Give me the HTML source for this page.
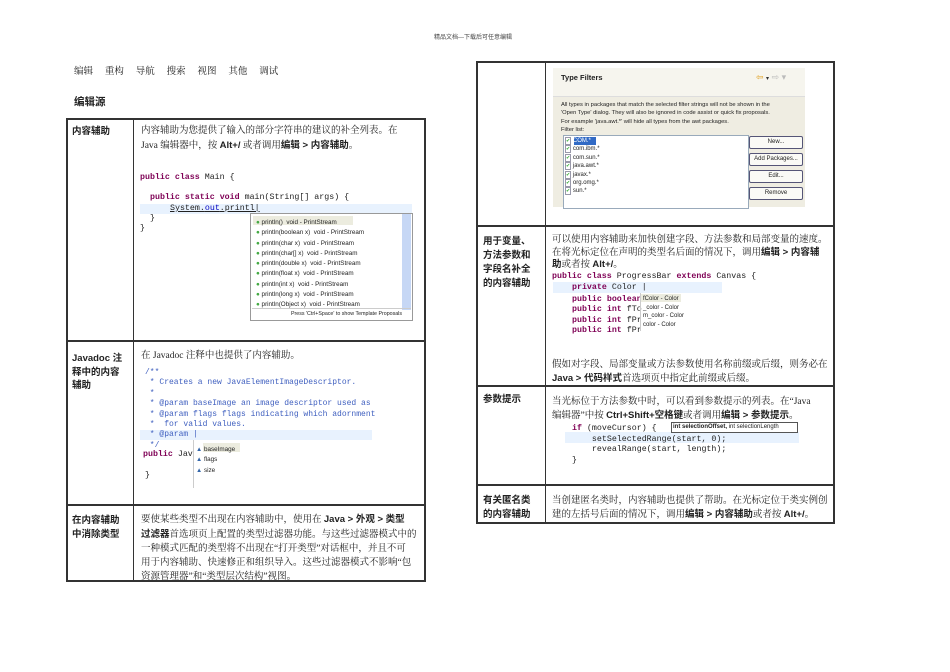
<!DOCTYPE html>
<html><head><meta charset="utf-8"><style>
body{margin:0;width:950px;height:672px;background:#fff;position:relative;overflow:hidden;font-family:"Liberation Serif","Noto Serif CJK SC",serif;color:#222}
.a{position:absolute;white-space:nowrap;line-height:1}
.t{font-size:9.5px}
.b{font-weight:bold;font-family:"Liberation Sans","Noto Sans CJK SC",sans-serif}
.l{font-size:9.5px;font-weight:bold;font-family:"Liberation Sans","Noto Sans CJK SC",sans-serif}
.c{font-family:"Liberation Mono",monospace;font-size:8.3px;color:#222}
.k{color:#7f0055;font-weight:bold}
.cm{color:#3f5fbf}
.s{font-family:"Liberation Sans",sans-serif;font-size:6.3px;color:#222}
.line{position:absolute;background:#333}
</style></head><body>
<div class="a" style="left:434px;top:35px;font-size:6px;color:#444;font-family:'Liberation Sans','Noto Sans CJK SC',sans-serif">精品文档---下载后可任意编辑</div>
<div class="a t" style="left:74px;top:68px;word-spacing:0">编辑&nbsp;&nbsp;&nbsp;&nbsp;&nbsp;重构&nbsp;&nbsp;&nbsp;&nbsp;&nbsp;导航&nbsp;&nbsp;&nbsp;&nbsp;&nbsp;搜索&nbsp;&nbsp;&nbsp;&nbsp;&nbsp;视图&nbsp;&nbsp;&nbsp;&nbsp;&nbsp;其他&nbsp;&nbsp;&nbsp;&nbsp;&nbsp;调试</div>
<div class="a l" style="left:74px;top:97px;font-size:10.5px">编辑源</div>

<!-- left table -->
<div class="line" style="left:66px;top:118px;width:360px;height:2px"></div>
<div class="line" style="left:66px;top:118px;width:2px;height:464px"></div>
<div class="line" style="left:424px;top:118px;width:2px;height:464px"></div>
<div class="line" style="left:133px;top:118px;width:1px;height:464px"></div>
<div class="line" style="left:66px;top:340px;width:360px;height:2px"></div>
<div class="line" style="left:66px;top:504px;width:360px;height:2px"></div>
<div class="line" style="left:66px;top:580px;width:360px;height:2px"></div>

<div class="a l" style="left:72px;top:127px">内容辅助</div>
<div class="a t" style="left:141px;top:127px">内容辅助为您提供了输入的部分字符串的建议的补全列表。在</div>
<div class="a t" style="left:141px;top:141px">Java 编辑器中，按 <span class="b">Alt+/</span> 或者调用<span class="b">编辑 &gt; 内容辅助</span>。</div>
<div class="a c" style="left:140px;top:174px"><span class="k">public class</span> Main {</div>
<div class="a c" style="left:150px;top:194px"><span class="k">public static void</span> main(String[] args) {</div>
<div style="position:absolute;left:140px;top:204px;width:272px;height:10px;background:#e8f2fe"></div>
<div class="a c" style="left:170px;top:205px;text-decoration:underline">System.<span style="color:#0000c0">out</span>.printl|</div>
<div class="a c" style="left:150px;top:215px">}</div>
<div class="a c" style="left:140px;top:225px">}</div>
<div style="position:absolute;left:250px;top:213px;width:161px;height:106px;border:1px solid #999;background:#fff"></div>
<div style="position:absolute;left:402px;top:214px;width:9px;height:96px;background:#c6d7f5"></div>
<div style="position:absolute;left:252px;top:308px;width:159px;height:1px;background:#ccc"></div>
<div class="a s" style="left:291px;top:312px;font-size:5.3px">Press 'Ctrl+Space' to show Template Proposals</div>
<div style="position:absolute;left:253px;top:216px;width:100px;height:9px;background:#ececdf"></div>
<div class="a s" style="left:256px;top:218px;line-height:10.3px"><span style="color:#4a4">●</span> println()&nbsp; void - PrintStream<br><span style="color:#4a4">●</span> println(boolean x)&nbsp; void - PrintStream<br><span style="color:#4a4">●</span> println(char x)&nbsp; void - PrintStream<br><span style="color:#4a4">●</span> println(char[] x)&nbsp; void - PrintStream<br><span style="color:#4a4">●</span> println(double x)&nbsp; void - PrintStream<br><span style="color:#4a4">●</span> println(float x)&nbsp; void - PrintStream<br><span style="color:#4a4">●</span> println(int x)&nbsp; void - PrintStream<br><span style="color:#4a4">●</span> println(long x)&nbsp; void - PrintStream<br><span style="color:#4a4">●</span> println(Object x)&nbsp; void - PrintStream</div>

<div class="a l" style="left:72px;top:352px;line-height:13.5px">Javadoc 注<br>释中的内容<br>辅助</div>
<div class="a t" style="left:141px;top:352px">在 Javadoc 注释中也提供了内容辅助。</div>
<div style="position:absolute;left:140px;top:430px;width:232px;height:10px;background:#e8f2fe"></div>
<div class="a c cm" style="left:145px;top:368px;line-height:10.4px;font-size:8px">/**<br>&nbsp;* Creates a new JavaElementImageDescriptor.<br>&nbsp;*<br>&nbsp;* @param baseImage an image descriptor used as<br>&nbsp;* @param flags flags indicating which adornment<br>&nbsp;*&nbsp; for valid values.<br>&nbsp;* @param |<br>&nbsp;*/</div>
<div class="a c" style="left:143px;top:451px"><span class="k">public</span> Jav</div>
<div class="a c" style="left:145px;top:472px">}</div>
<div style="position:absolute;left:193px;top:440px;width:1px;height:48px;background:#ccc"></div>
<div style="position:absolute;left:203px;top:443px;width:37px;height:9px;background:#ececdf"></div>
<div class="a s" style="left:196px;top:445px;line-height:10.3px"><span style="color:#36a">▲</span> baseImage<br><span style="color:#36a">▲</span> flags<br><span style="color:#36a">▲</span> size</div>

<div class="a l" style="left:72px;top:514px;line-height:14px">在内容辅助<br>中消除类型</div>
<div class="a t" style="left:141px;top:513px;line-height:13.9px">要使某些类型不出现在内容辅助中，使用在 <span class="b">Java &gt; 外观 &gt; 类型</span><br><span class="b">过滤器</span>首选项页上配置的类型过滤器功能。与这些过滤器模式中的<br>一种模式匹配的类型将不出现在“打开类型”对话框中，并且不可<br>用于内容辅助、快速修正和组织导入。这些过滤器模式不影响“包<br>资源管理器”和“类型层次结构”视图。</div>

<!-- right table -->
<div class="line" style="left:476px;top:61px;width:359px;height:2px"></div>
<div class="line" style="left:476px;top:61px;width:2px;height:463px"></div>
<div class="line" style="left:833px;top:61px;width:2px;height:463px"></div>
<div class="line" style="left:545px;top:61px;width:1px;height:463px"></div>
<div class="line" style="left:476px;top:225px;width:359px;height:2px"></div>
<div class="line" style="left:476px;top:385px;width:359px;height:2px"></div>
<div class="line" style="left:476px;top:484px;width:359px;height:2px"></div>
<div class="line" style="left:476px;top:522px;width:359px;height:2px"></div>

<div style="position:absolute;left:553px;top:68px;width:252px;height:139px;background:#efede2"></div>
<div style="position:absolute;left:553px;top:68px;width:252px;height:28px;background:#f6f5ee;border-bottom:1px solid #ddd"></div>
<div class="a b" style="left:561px;top:74px;font-size:7.5px">Type Filters</div>
<div class="a s" style="left:756px;top:73px;font-size:9px;color:#e0a020">⇦ <span style="color:#333;font-size:6px">▾</span> <span style="color:#bbb">⇨ ▾</span></div>
<div class="a s" style="left:561px;top:101px;line-height:8.4px;font-size:5.8px">All types in packages that match the selected filter strings will not be shown in the<br>'Open Type' dialog. They will also be ignored in code assist or quick fix proposals.<br>For example 'java.awt.*' will hide all types from the awt packages.<br>Filter list:</div>
<div style="position:absolute;left:563px;top:135px;width:184px;height:72px;background:#fff;border:1px solid #9ab"></div>
<div style="position:absolute;left:574px;top:137px;width:22px;height:8px;background:#316ac5"></div>
<div class="a s" style="left:565px;top:137px;line-height:8.4px;font-size:6px"><span style="color:#3a3;border:1px solid #99a;font-size:5px">✔</span> <span style="color:#fff">COM.*</span><br><span style="color:#3a3;border:1px solid #99a;font-size:5px">✔</span> com.ibm.*<br><span style="color:#3a3;border:1px solid #99a;font-size:5px">✔</span> com.sun.*<br><span style="color:#3a3;border:1px solid #99a;font-size:5px">✔</span> java.awt.*<br><span style="color:#3a3;border:1px solid #99a;font-size:5px">✔</span> javax.*<br><span style="color:#3a3;border:1px solid #99a;font-size:5px">✔</span> org.omg.*<br><span style="color:#3a3;border:1px solid #99a;font-size:5px">✔</span> sun.*</div>
<div style="position:absolute;left:749px;top:136px;width:52px;height:11px;border:1px solid #557;border-radius:2px;background:#fafaf6;font:6px 'Liberation Sans',sans-serif;text-align:center;line-height:11px">New...</div>
<div style="position:absolute;left:749px;top:153px;width:52px;height:11px;border:1px solid #557;border-radius:2px;background:#fafaf6;font:6px 'Liberation Sans',sans-serif;text-align:center;line-height:11px">Add Packages...</div>
<div style="position:absolute;left:749px;top:170px;width:52px;height:11px;border:1px solid #557;border-radius:2px;background:#fafaf6;font:6px 'Liberation Sans',sans-serif;text-align:center;line-height:11px">Edit...</div>
<div style="position:absolute;left:749px;top:187px;width:52px;height:11px;border:1px solid #557;border-radius:2px;background:#fafaf6;font:6px 'Liberation Sans',sans-serif;text-align:center;line-height:11px">Remove</div>

<div class="a l" style="left:483px;top:235px;line-height:14px">用于变量、<br>方法参数和<br>字段名补全<br>的内容辅助</div>
<div class="a t" style="left:552px;top:234px;line-height:12.5px">可以使用内容辅助来加快创建字段、方法参数和局部变量的速度。<br>在将光标定位在声明的类型名后面的情况下，调用<span class="b">编辑 &gt; 内容辅</span><br><span class="b">助</span>或者按 <span class="b">Alt+/</span>。</div>
<div class="a c" style="left:552px;top:273px"><span class="k">public class</span> ProgressBar <span class="k">extends</span> Canvas {</div>
<div style="position:absolute;left:553px;top:282px;width:169px;height:11px;background:#e8f2fe"></div>
<div class="a c" style="left:572px;top:284px"><span class="k">private</span> Color |</div>
<div class="a c" style="left:572px;top:295px;line-height:10.3px"><span class="k">public boolean</span><br><span class="k">public int</span> fTo<br><span class="k">public int</span> fPr<br><span class="k">public int</span> fPr</div>
<div style="position:absolute;left:640px;top:293px;width:1px;height:38px;background:#ccc"></div>
<div style="position:absolute;left:641px;top:294px;width:40px;height:8px;background:#ececdf"></div>
<div class="a s" style="left:643px;top:295px;line-height:8.7px;font-size:6px">fColor - Color<br>_color - Color<br>m_color - Color<br>color - Color</div>
<div class="a t" style="left:552px;top:358px;line-height:14px">假如对字段、局部变量或方法参数使用名称前缀或后缀，则务必在<br><span class="b">Java &gt; 代码样式</span>首选项页中指定此前缀或后缀。</div>

<div class="a l" style="left:483px;top:395px">参数提示</div>
<div class="a t" style="left:552px;top:395px;line-height:14px">当光标位于方法参数中时，可以看到参数提示的列表。在“Java<br>编辑器”中按 <span class="b">Ctrl+Shift+空格键</span>或者调用<span class="b">编辑 &gt; 参数提示</span>。</div>
<div style="position:absolute;left:565px;top:432px;width:234px;height:11px;background:#e8f2fe"></div>
<div class="a c" style="left:572px;top:424px;line-height:10.5px"><span class="k">if</span> (moveCursor) {<br>&nbsp;&nbsp;&nbsp;&nbsp;setSelectedRange(start, 0);<br>&nbsp;&nbsp;&nbsp;&nbsp;revealRange(start, length);<br>}</div>
<div style="position:absolute;left:671px;top:422px;width:124px;height:9px;border:1px solid #555;background:#fff;font:6px 'Liberation Sans',sans-serif;line-height:9px;padding-left:1px"><b>int selectionOffset,</b> int selectionLength</div>

<div class="a l" style="left:483px;top:494px;line-height:14px">有关匿名类<br>的内容辅助</div>
<div class="a t" style="left:552px;top:494px;line-height:14px">当创建匿名类时，内容辅助也提供了帮助。在光标定位于类实例创<br>建的左括号后面的情况下，调用<span class="b">编辑 &gt; 内容辅助</span>或者按 <span class="b">Alt+/</span>。</div>
</body></html>
